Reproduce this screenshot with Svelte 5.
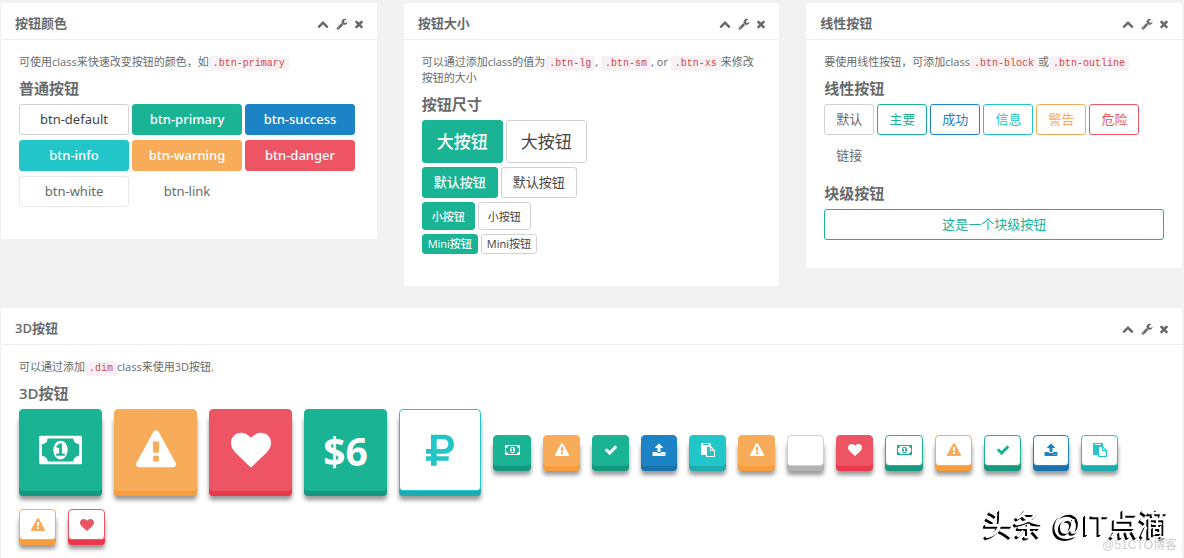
<script>
  const chevron = 'M1683 1331l-166 165q-19 19-45 19t-45-19l-531-531-531 531q-19 19-45 19t-45-19l-166-165q-19-19-19-45.5t19-45.5l742-741q19-19 45-19t45 19l742 741q19 19 19 45.5t-19 45.5z';
  const wrench = 'M448 1472q0-26-19-45t-45-19-45 19-19 45 19 45 45 19 45-19 19-45zm644-420l-682 682q-37 37-90 37-52 0-91-37l-106-108q-38-36-38-90 0-53 38-91l681-681q39 98 114.5 173.5t173.5 114.5zm634-435q0 39-23 106-47 134-164.5 217.5t-258.5 83.5q-185 0-316.5-131.5t-131.5-316.5 131.5-316.5 316.5-131.5q58 0 121.5 16.5t107.5 46.5q16 11 16 28t-16 28l-293 169v224l193 107q5-3 79-48.5t135.5-81 70.5-35.5q15 0 23.5 10t8.5 25z';
  const times = 'M1490 1322q0 40-28 68l-136 136q-28 28-68 28t-68-28l-294-294-294 294q-28 28-68 28t-68-28l-136-136q-28-28-28-68t28-68l294-294-294-294q-28-28-28-68t28-68l136-136q28-28 68-28t68 28l294 294 294-294q28-28 68-28t68 28l136 136q28 28 28 68t-28 68l-294 294 294 294q28 28 28 68z';

  const icons = {
    money: {
      box: '0 0 1920 1792',
      d: 'M768 1152h384v-96h-128v-448h-114l-148 137 77 80q42-37 55-57h2v288h-128v96zm512-256q0 70-21 142t-59.5 134-101.5 101-138 39-138-39-101.5-101-59.5-134-21-142 21-142 59.5-134 101.5-101 138-39 138 39 101.5 101 59.5 134 21 142zm512 256v-512q-106 0-181-75t-75-181h-1152q0 106-75 181t-181 75v512q106 0 181 75t75 181h1152q0-106 75-181t181-75zm128-832v1152q0 26-19 45t-45 19h-1792q-26 0-45-19t-19-45v-1152q0-26 19-45t45-19h1792q26 0 45 19t19 45z'
    },
    warning: {
      box: '0 0 1792 1792',
      d: 'M1024 1375v-190q0-14-9.5-23.5t-22.5-9.5h-192q-13 0-22.5 9.5t-9.5 23.5v190q0 14 9.5 23.5t22.5 9.5h192q13 0 22.5-9.5t9.5-23.5zm-2-374l18-459q0-12-10-19-13-11-24-11h-220q-11 0-24 11-10 7-10 21l17 457q0 10 10 16.5t24 6.5h185q14 0 23.5-6.5t10.5-16.5zm-14-934l768 1408q35 63-2 126-17 29-46.5 46t-63.5 17h-1536q-34 0-63.5-17t-46.5-46q-37-63-2-126l768-1408q17-31 47-49t65-18 65 18 47 49z'
    },
    heart: {
      box: '0 0 1792 1792',
      d: 'M896 1664q-26 0-44-18l-624-602q-10-8-27.5-26t-55.5-65.5-68-97.5-53.5-121-23.5-138q0-220 127-344t351-124q62 0 126.5 21.5t120 58 95.5 68.5 76 68q36-36 76-68t95.5-68.5 120-58 126.5-21.5q224 0 351 124t127 344q0 221-229 450l-623 600q-18 18-44 18z'
    },
    check: {
      box: '0 0 1792 1792',
      d: 'M1671 566q0 40-28 68l-724 724-136 136q-28 28-68 28t-68-28l-136-136-362-362q-28-28-28-68t28-68l136-136q28-28 68-28t68 28l294 295 656-657q28-28 68-28t68 28l136 136q28 28 28 68z'
    },
    upload: {
      box: '0 0 1792 1792',
      d: 'M1344 1472q0-26-19-45t-45-19-45 19-19 45 19 45 45 19 45-19 19-45zm256 0q0-26-19-45t-45-19-45 19-19 45 19 45 45 19 45-19 19-45zm128-224v320q0 40-28 68t-68 28h-1472q-40 0-68-28t-28-68v-320q0-40 28-68t68-28h427q21 56 70.5 92t110.5 36h256q61 0 110.5-36t70.5-92h427q40 0 68 28t28 68zm-325-648q-17 40-59 40h-256v448q0 26-19 45t-45 19h-256q-26 0-45-19t-19-45v-448h-256q-42 0-59-40-17-39 14-69l448-448q18-19 45-19t45 19l448 448q31 30 14 69z'
    },
    paste: {
      box: '0 0 1792 1792',
      d: 'M768 1664h896v-640h-416q-40 0-68-28t-28-68v-416h-384v1152zm256-1440v-64q0-13-9.5-22.5t-22.5-9.5h-704q-13 0-22.5 9.5t-9.5 22.5v64q0 13 9.5 22.5t22.5 9.5h704q13 0 22.5-9.5t9.5-22.5zm256 672h299l-299-299v299zm512 128v672q0 40-28 68t-68 28h-960q-40 0-68-28t-28-68v-160h-544q-40 0-68-28t-28-68v-1344q0-40 28-68t68-28h1088q40 0 68 28t28 68v328q21 13 36 28l408 408q28 28 48 76t20 88z'
    },
    ruble: {
      box: '-18 -14 120 120',
      d: 'M15 0H55C73 0 84 12 84 29S73 57 55 57H32V65H68V78H32V93H15V78H0V65H15V57H0V43H15ZM32 14V43H54C62 43 67 37 67 29S62 14 54 14Z'
    }
  };

  const colors = ['default', 'primary', 'success', 'info', 'warning', 'danger', 'white', 'link'];

  const sizes = [
    { size: 'lg', text: '大按钮' },
    { size: 'md', text: '默认按钮' },
    { size: 'sm', text: '小按钮' },
    { size: 'xs', text: 'Mini按钮' }
  ];

  const outlines = [
    { kind: 'default', text: '默认' },
    { kind: 'primary', text: '主要' },
    { kind: 'success', text: '成功' },
    { kind: 'info', text: '信息' },
    { kind: 'warning', text: '警告' },
    { kind: 'danger', text: '危险' },
    { kind: 'link', text: '链接' }
  ];

  const dims = [
    { kind: 'primary', icon: 'money', large: true },
    { kind: 'warning', icon: 'warning', large: true },
    { kind: 'danger', icon: 'heart', large: true },
    { kind: 'primary', text: '$6', large: true },
    { kind: 'info', icon: 'ruble', large: true, outline: true },
    { kind: 'primary', icon: 'money' },
    { kind: 'warning', icon: 'warning' },
    { kind: 'primary', icon: 'check' },
    { kind: 'success', icon: 'upload' },
    { kind: 'info', icon: 'paste' },
    { kind: 'warning', icon: 'warning' },
    { kind: 'default' },
    { kind: 'danger', icon: 'heart' },
    { kind: 'primary', icon: 'money', outline: true },
    { kind: 'warning', icon: 'warning', outline: true },
    { kind: 'primary', icon: 'check', outline: true },
    { kind: 'success', icon: 'upload', outline: true },
    { kind: 'info', icon: 'paste', outline: true },
    { kind: 'warning', icon: 'warning', outline: true },
    { kind: 'danger', icon: 'heart', outline: true }
  ];
</script>

{#snippet heading(title)}
  <header class="ibox-title">
    <h5>{title}</h5>
    <div class="ibox-tools">
      <button type="button" aria-label="折叠"><svg viewBox="0 0 1792 1792"><path d={chevron} /></svg></button>
      <button type="button" aria-label="设置"><svg viewBox="0 0 1792 1792"><path d={wrench} /></svg></button>
      <button type="button" aria-label="关闭"><svg class="times" viewBox="302 0 1188 1792"><path d={times} /></svg></button>
    </div>
  </header>
{/snippet}

<main class="wrapper">
  <div class="row">
    <section class="ibox">
      {@render heading('按钮颜色')}
      <div class="ibox-content">
        <p>可使用class来快速改变按钮的颜色，如<code>.btn-primary</code></p>
        <h3>普通按钮</h3>
        <div class="colors">
          {#each colors as color}
            <button type="button" class="btn {color}">btn-{color}</button>
          {/each}
        </div>
      </div>
    </section>

    <section class="ibox">
      {@render heading('按钮大小')}
      <div class="ibox-content">
        <p>可以通过添加class的值为<code>.btn-lg</code>, <code>.btn-sm</code>, or <code>.btn-xs</code>来修改按钮的大小</p>
        <h3>按钮尺寸</h3>
        <div class="sizes">
          {#each sizes as item}
            <div class="buttons">
              <button type="button" class="btn primary {item.size}">{item.text}</button>
              <button type="button" class="btn default {item.size}">{item.text}</button>
            </div>
          {/each}
        </div>
      </div>
    </section>

    <section class="ibox">
      {@render heading('线性按钮')}
      <div class="ibox-content short">
        <p>要使用线性按钮，可添加class<code>.btn-block</code>或<code>.btn-outline</code></p>
        <h3>线性按钮</h3>
        <div class="buttons">
          {#each outlines as item}
            <button type="button" class="btn outline {item.kind}">{item.text}</button>
          {/each}
        </div>
        <h3 class="spaced">块级按钮</h3>
        <button type="button" class="btn outline primary block">这是一个块级按钮</button>
      </div>
    </section>
  </div>

  <section class="ibox">
    {@render heading('3D按钮')}
    <div class="ibox-content">
      <p>可以通过添加<code>.dim</code>class来使用3D按钮.</p>
      <h3>3D按钮</h3>
      <div class="dims">
        {#each dims as item}
          <button
            type="button"
            class="btn dim {item.kind} {item.icon ?? ''}"
            class:large={item.large}
            class:outline={item.outline}
            aria-label={item.text ?? item.icon ?? item.kind}
          >
            {#if item.icon}
              <svg viewBox={icons[item.icon].box}><path fill-rule="evenodd" d={icons[item.icon].d} /></svg>
            {:else if item.text}
              {item.text}
            {/if}
          </button>
        {/each}
      </div>
    </div>
  </section>
</main>

<div class="mark">头条 @IT点滴</div>
<div class="credit">@51CTO博客</div>

<style>
  :global(html) {
    overflow: hidden;
  }

  :global(body) {
    margin: 0;
    background: #f2f2f2;
  }

  .wrapper {
    padding: 3px 2px 0 1px;
    font-family: 'Open Sans', 'Noto Sans CJK SC', sans-serif;
    font-size: 11px;
    line-height: 16px;
    color: #676a6c;
  }

  .row {
    display: grid;
    grid-template-columns: repeat(3, 1fr);
    align-items: start;
    gap: 27px;
    margin-bottom: 22px;
  }

  .ibox {
    background: #fff;
  }

  .ibox-title {
    display: flex;
    align-items: center;
    justify-content: space-between;
    padding: 12px 14px 8px;
    border-bottom: 1px solid #eee;
  }

  h5 {
    margin: 0;
    font-size: 13px;
    line-height: 16px;
    font-weight: 600;
  }

  .ibox-tools {
    display: flex;
    gap: 7px;
    padding-top: 2px;
  }

  .ibox-tools button {
    display: block;
    padding: 0;
    border: 0;
    background: none;
    color: #676a6c;
    cursor: pointer;
  }

  svg {
    display: block;
    width: 12px;
    height: 12px;
    fill: currentColor;
  }

  svg.times {
    width: 8px;
  }

  .ibox-content {
    padding: 14px 18px 32px;
  }

  .ibox-content.short {
    padding-bottom: 28px;
  }

  p {
    margin: 0 0 10px;
  }

  code {
    padding: 2px 4px;
    border-radius: 3px;
    background: #f9f2f4;
    color: #d14545;
    font-family: 'Liberation Mono', monospace;
    font-size: 10px;
    line-height: 10px;
  }

  h3 {
    margin: 0 0 8px;
    font-size: 15px;
    line-height: 16px;
    font-weight: 600;
  }

  h3.spaced {
    margin-top: 14px;
  }

  .btn {
    height: 31px;
    padding: 0 11px;
    box-sizing: border-box;
    border: 1px solid var(--c);
    border-radius: 3px;
    background: var(--c);
    color: #fff;
    font-family: inherit;
    font-size: 13px;
    font-weight: 500;
    line-height: 19px;
    white-space: nowrap;
    cursor: pointer;
  }

  .primary { --c: #1ab394; --dark: #16987e; }
  .success { --c: #1c84c6; --dark: #1872ab; }
  .info { --c: #23c6c8; --dark: #1eacae; }
  .warning { --c: #f8ac59; --dark: #f79d3c; }
  .danger { --c: #ed5565; --dark: #ea394c; }

  .default {
    --c: #fff;
    --dark: #b3b3b3;
    border-color: #d2d2d2;
    color: #444;
    font-weight: 400;
  }

  .white {
    --c: #fff;
    border-color: #e7eaec;
    color: #676a6c;
    font-weight: 400;
  }

  .link {
    --c: transparent;
    color: #676a6c;
    font-weight: 400;
  }

  .outline {
    background: #fff;
    color: var(--c);
    font-weight: 400;
  }

  .outline.default,
  .outline.link {
    color: #676a6c;
  }

  .colors {
    display: grid;
    grid-template-columns: repeat(3, 110px);
    gap: 5px 3px;
  }

  .colors .btn {
    font-family: 'Noto Sans', sans-serif;
  }

  .sizes {
    display: grid;
    gap: 4px;
  }

  .buttons {
    display: flex;
    flex-wrap: wrap;
    gap: 5px 3px;
  }

  .lg {
    height: 43px;
    padding: 0 14px;
    font-size: 17px;
  }

  .sm {
    height: 28px;
    padding: 0 9px;
    font-size: 11px;
  }

  .xs {
    height: 20px;
    padding: 0 5px;
    font-size: 11px;
    line-height: 16px;
  }

  .block {
    display: block;
    width: 100%;
  }

  .dims {
    display: flex;
    flex-wrap: wrap;
    align-items: center;
    gap: 18px 12px;
  }

  .dim {
    display: flex;
    align-items: center;
    justify-content: center;
    width: 37px;
    height: 31px;
    padding: 0;
    border-radius: 4px;
    box-shadow: 0 5px 0 var(--dark), 0 9px 4px #999;
  }

  .dim svg {
    width: 14px;
    height: 14px;
  }

  .dim.money {
    width: 38px;
  }

  .dim.money svg {
    width: 15px;
  }

  .dim.upload {
    width: 36px;
  }

  .dim.large {
    width: 83px;
    height: 82px;
    font-size: 39px;
    font-weight: 700;
  }

  .dim.large svg {
    width: 40px;
    height: 40px;
  }

  .dim.large.money svg {
    width: 43px;
  }

  .dim.large.ruble {
    width: 82px;
  }

  .mark,
  .credit {
    position: fixed;
    font-family: 'Liberation Sans', 'Noto Sans CJK SC', sans-serif;
    white-space: nowrap;
  }

  .mark {
    right: 15px;
    bottom: 13px;
    color: #fff;
    font-size: 30px;
    font-weight: 500;
    line-height: 40px;
    text-shadow: -1px 1px 0 #000, -2px 2px 0 #000;
  }

  .credit {
    right: 7px;
    bottom: 5px;
    color: #ccc;
    font-size: 12px;
    line-height: 16px;
  }
</style>
